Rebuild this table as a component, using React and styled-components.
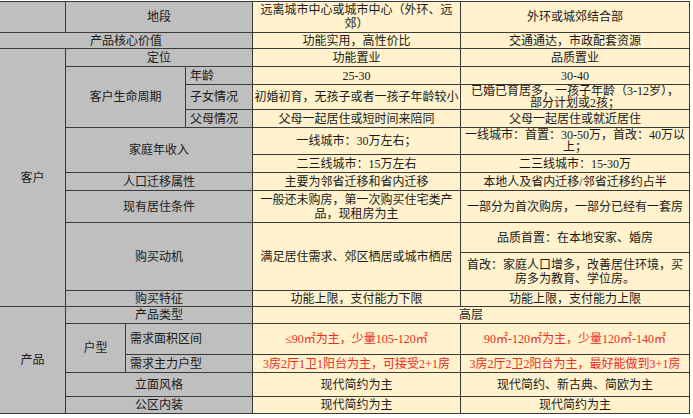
import React from 'react';
import styled, { createGlobalStyle } from 'styled-components';

const GlobalStyle = createGlobalStyle`
    html, body {
        margin: 0;
        padding: 0;
        background: #fff;
    }
`;

const Page = styled.div`
    padding-top: 1px;
    width: 693px;
    height: 418px;
    overflow: hidden;
    box-sizing: border-box;
`;

const Sheet = styled.div`
    display: grid;
    grid-template-columns: 65px 59px 59px 66px 207px 228px;
    grid-template-rows: 30px 15px 17px 17px 24px 17px 26px 17px 17px 31px 29px 37px 15px 16px 30px 17px 23px 16px;
    gap: 1px;
    width: max-content;
    background: #3a3a3a;
    padding: 1px 1px 1px 0;
    font-family: 'Liberation Serif', 'Noto Sans CJK SC', serif;
    font-size: 12px;
    line-height: 14px;
    color: #1a1a1a;
`;

const Cell = styled.div`
    grid-column: ${(p) => p.$col};
    grid-row: ${(p) => p.$row};
    background: ${(p) => (p.$head ? '#bfbfbf' : '#fff2cc')};
    color: ${(p) => (p.$red ? '#ee2b24' : 'inherit')};
    display: flex;
    align-items: center;
    justify-content: ${(p) => (p.$left ? 'flex-start' : 'center')};
    text-align: ${(p) => (p.$left ? 'left' : 'center')};
    padding: 0 ${(p) => (p.$left ? '4px' : '1px')};
    overflow: hidden;
    white-space: pre-line;
    line-height: ${(p) => (p.$tight ? '12px' : '14px')};
`;

const Head = (props) => <Cell $head {...props} />;

export default function App() {
    return (
        <Page>
            <GlobalStyle />
            <Sheet>
                <Head $col="1" $row="1" />
                <Head $col="2 / 5" $row="1">地段</Head>
                <Cell $col="5" $row="1">{'远离城市中心或城市中心（外环、远\n郊）'}</Cell>
                <Cell $col="6" $row="1">外环或城郊结合部</Cell>

                <Head $col="1 / 5" $row="2">产品核心价值</Head>
                <Cell $col="5" $row="2">功能实用，高性价比</Cell>
                <Cell $col="6" $row="2">交通通达，市政配套资源</Cell>

                <Head $col="1" $row="3 / 14">客户</Head>
                <Head $col="2 / 5" $row="3">定位</Head>
                <Cell $col="5" $row="3">功能置业</Cell>
                <Cell $col="6" $row="3">品质置业</Cell>

                <Head $col="2 / 4" $row="4 / 7">客户生命周期</Head>
                <Head $col="4" $row="4" $left>年龄</Head>
                <Cell $col="5" $row="4">25-30</Cell>
                <Cell $col="6" $row="4">30-40</Cell>
                <Head $col="4" $row="5" $left>子女情况</Head>
                <Cell $col="5" $row="5">初婚初育，无孩子或者一孩子年龄较小</Cell>
                <Cell $col="6" $row="5" $tight>{'已婚已育居多，一孩子年龄（3-12岁），\n部分计划或2孩；'}</Cell>
                <Head $col="4" $row="6" $left>父母情况</Head>
                <Cell $col="5" $row="6">父母一起居住或短时间来陪同</Cell>
                <Cell $col="6" $row="6">父母一起居住或就近居住</Cell>

                <Head $col="2 / 5" $row="7 / 9">家庭年收入</Head>
                <Cell $col="5" $row="7">一线城市：30万左右；</Cell>
                <Cell $col="6" $row="7" $tight>{'一线城市：首置：30-50万，首改：40万以\n上；'}</Cell>
                <Cell $col="5" $row="8">二三线城市：15万左右</Cell>
                <Cell $col="6" $row="8">二三线城市：15-30万</Cell>

                <Head $col="2 / 5" $row="9">人口迁移属性</Head>
                <Cell $col="5" $row="9">主要为邻省迁移和省内迁移</Cell>
                <Cell $col="6" $row="9">本地人及省内迁移/邻省迁移约占半</Cell>

                <Head $col="2 / 5" $row="10">现有居住条件</Head>
                <Cell $col="5" $row="10">{'一般还未购房，第一次购买住宅类产\n品，现租房为主'}</Cell>
                <Cell $col="6" $row="10">一部分为首次购房，一部分已经有一套房</Cell>

                <Head $col="2 / 5" $row="11 / 13">购买动机</Head>
                <Cell $col="5" $row="11 / 13">满足居住需求、郊区栖居或城市栖居</Cell>
                <Cell $col="6" $row="11">品质首置：在本地安家、婚房</Cell>
                <Cell $col="6" $row="12">{'首改：家庭人口增多，改善居住环境，买\n房多为教育、学位房。'}</Cell>

                <Head $col="2 / 5" $row="13">购买特征</Head>
                <Cell $col="5" $row="13">功能上限，支付能力下限</Cell>
                <Cell $col="6" $row="13">功能上限，支付能力上限</Cell>

                <Head $col="1" $row="14 / 19">产品</Head>
                <Head $col="2 / 5" $row="14">产品类型</Head>
                <Cell $col="5 / 7" $row="14">高层</Cell>

                <Head $col="2" $row="15 / 17">户型</Head>
                <Head $col="3 / 5" $row="15" $left>需求面积区间</Head>
                <Cell $col="5" $row="15" $red>≤90㎡为主，少量105-120㎡</Cell>
                <Cell $col="6" $row="15" $red>90㎡-120㎡为主，少量120㎡-140㎡</Cell>
                <Head $col="3 / 5" $row="16" $left>需求主力户型</Head>
                <Cell $col="5" $row="16" $red>3房2厅1卫1阳台为主，可接受2+1房</Cell>
                <Cell $col="6" $row="16" $red>3房2厅2卫2阳台为主，最好能做到3+1房</Cell>

                <Head $col="2 / 5" $row="17">立面风格</Head>
                <Cell $col="5" $row="17">现代简约为主</Cell>
                <Cell $col="6" $row="17">现代简约、新古典、简欧为主</Cell>

                <Head $col="2 / 5" $row="18">公区内装</Head>
                <Cell $col="5" $row="18">现代简约为主</Cell>
                <Cell $col="6" $row="18">现代简约为主</Cell>
            </Sheet>
        </Page>
    );
}
